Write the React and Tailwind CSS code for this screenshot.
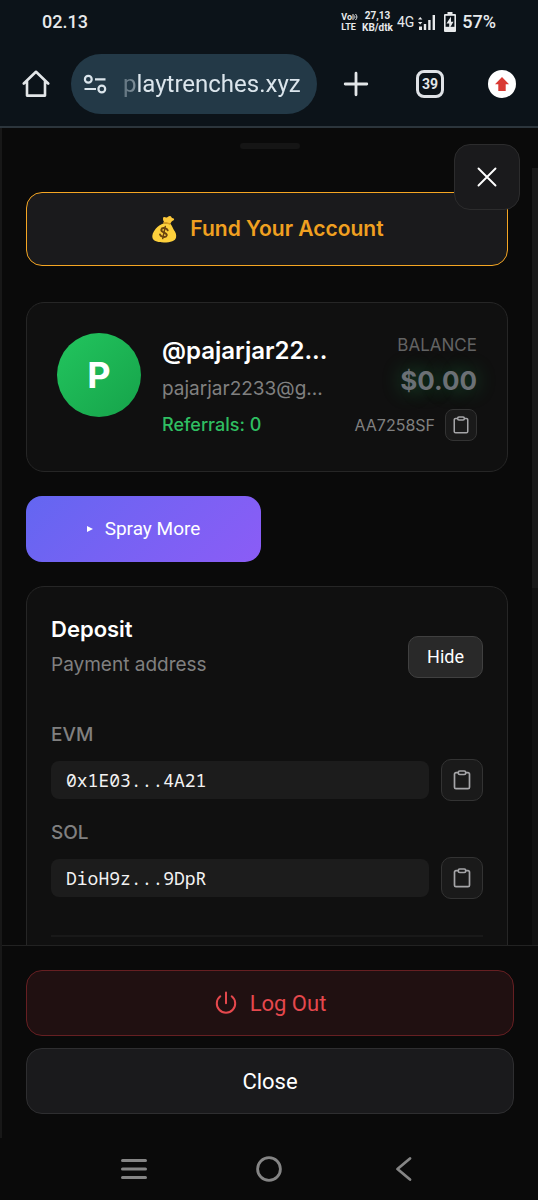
import React, { useState } from 'react'

const addresses = [
  { label: 'EVM', value: '0x1E03...4A21' },
  { label: 'SOL', value: 'DioH9z...9DpR' },
]

function ClipboardIcon({ className }) {
  return (
    <svg
      className={className}
      viewBox="0 0 20 20"
      fill="none"
      stroke="currentColor"
      strokeWidth="1.700"
      strokeLinejoin="round"
    >
      <path d="M6.300 2.700H4a1.500 1.500 0 0 0-1.500 1.500v13a1.500 1.500 0 0 0 1.500 1.500h12a1.500 1.500 0 0 0 1.500-1.500v-13A1.500 1.500 0 0 0 16 2.700h-2.300" />
      <rect x="6.300" y="1" width="7.400" height="3.500" rx="1.400" />
    </svg>
  )
}

function MoneyBagIcon() {
  return (
    <svg className="h-7 w-7" viewBox="0 0 28 28">
      <path
        d="M14.5 7.4c-1.4-1.5-1.9-3.7-1.2-5 .9-.9 2.3.5 3.6 0 1.300-.5 1.700-1.600 3.100-1.500 1.300.1 1.200 1.500 2.200 2 1 .4 2 .4 1.900 1.500-.2 1.200-1.700 1.100-2.400 2-.6.8-.8 1.300-1.300 2z"
        fill="#fdc93a"
      />
      <path
        d="M14 8.200c-3.500 1.100-6.200 3-8.300 5.600-2.600 3.100-4 6.700-3.200 9.200 1 3.100 5 4.400 11.300 4.400 7 0 11.700-1.300 12.300-5.200.4-2.800-.4-4.700-2.200-7.200-1-1.500-2.100-4.600-3.700-6.400z"
        fill="#fdd03c"
      />
      <path
        d="M13.300 7.200c2.500-.4 5.200.200 7.300 1.600l-.6 1.300c-2.200-1.200-4.500-1.700-7-1.400z"
        fill="#d79a1e"
      />
      <g
        transform="rotate(12 14 17.500)"
        fill="none"
        stroke="#6b4410"
        strokeWidth="1.900"
        strokeLinecap="round"
      >
        <path d="M17.200 14.600c-.7-1.200-1.800-1.500-3.200-1.500-1.900 0-3.200.8-3.200 2.200 0 3.300 6.500 1.100 6.500 4.400 0 1.500-1.400 2.300-3.300 2.300-1.600 0-2.900-.5-3.500-1.700" />
        <path d="M14 11.300v12.400" strokeWidth="1.500" />
      </g>
    </svg>
  )
}

function StatusBar() {
  return (
    <div className="flex h-[43px] shrink-0 items-center justify-between px-[42px] font-['Roboto',sans-serif] text-[#e8eaec]">
      <span className="text-lg font-medium">02.13</span>
      <div className="flex items-center">
        <div className="mr-1 flex flex-col text-[9px] leading-[10px] font-bold">
          <span className="flex items-center">
            Vo
            <svg
              className="h-2 w-1.5"
              viewBox="0 0 6 8"
              fill="none"
              stroke="currentColor"
            >
              <path d="M1 1v6M2.300 2.500c.8 1 .8 2 0 3M3.500 1c1.900 1.900 1.900 4.100 0 6" />
            </svg>
          </span>
          <span>LTE</span>
        </div>
        <div className="mr-1 flex flex-col items-center text-[10px] leading-3 font-bold">
          <span>27,13</span>
          <span>KB/dtk</span>
        </div>
        <span className="mr-1 text-sm">4G</span>
        <svg
          className="mr-2 h-[18px] w-[18px]"
          viewBox="0 0 18 18"
          fill="currentColor"
        >
          <path d="M0 6.500 2.200 4l2.200 2.500zM0 9l2.200 2.500L4.400 9zM1 13.500h3V17H1zM5.800 11h2.400v6H5.800zM10.200 7h2.400v10h-2.400zM14.600 2H17v15h-2.400z" />
        </svg>
        <svg className="mr-1.5 h-5 w-3" viewBox="0 0 12 20">
          <path
            d="M3.500 0h5v2H11a1 1 0 0 1 1 1v16a1 1 0 0 1-1 1H1a1 1 0 0 1-1-1V3a1 1 0 0 1 1-1h2.500z"
            fill="currentColor"
          />
          <rect x="1.600" y="3.800" width="8.800" height="11" fill="#0c1319" />
          <path d="M7 4.500 2.500 11.500h2.700v5.500l4.300-7.200H7z" fill="currentColor" />
        </svg>
        <span className="text-lg font-medium">57%</span>
      </div>
    </div>
  )
}

function BrowserBar() {
  const [url, setUrl] = useState('playtrenches.xyz')

  return (
    <div className="flex shrink-0 items-center border-b-2 border-[#2c353c] px-[22px] pt-[11px] pb-3">
      <button type="button" aria-label="Home" className="text-[#e3e6e8]">
        <svg
          className="h-7 w-7"
          viewBox="0 0 28 28"
          fill="none"
          stroke="currentColor"
          strokeWidth="2.600"
          strokeLinejoin="round"
          strokeLinecap="round"
        >
          <path d="M1.800 13.500 14 1.800l12.200 11.700M5 11v14.600h18V11" />
        </svg>
      </button>
      <div className="ml-[21px] flex h-[60px] min-w-0 flex-1 items-center rounded-full bg-[#233947] pr-2 pl-3">
        <button
          type="button"
          aria-label="Site information"
          className="shrink-0 text-[#dbe5ec]"
        >
          <svg
            className="h-6 w-6"
            viewBox="0 0 24 24"
            fill="none"
            stroke="currentColor"
            strokeWidth="2.200"
          >
            <circle cx="5.300" cy="7.300" r="3.400" />
            <path d="M12 7.300h10.500M1.500 17H13" />
            <circle cx="18.800" cy="17" r="3.400" />
          </svg>
        </button>
        <input
          type="text"
          aria-label="Address"
          value={url}
          onChange={(e) => setUrl(e.target.value)}
          className="ml-4 w-full min-w-0 bg-transparent font-['Roboto',sans-serif] text-2xl text-[#dbe5ec] outline-none [mask-image:linear-gradient(to_right,rgba(0,0,0,0.35),rgba(0,0,0,0.5)_13px,black_15px)]"
        />
      </div>
      <button
        type="button"
        aria-label="New tab"
        className="ml-[26px] text-[#e3e6e8]"
      >
        <svg
          className="h-[26px] w-[26px]"
          viewBox="0 0 26 26"
          stroke="currentColor"
          strokeWidth="2.800"
          strokeLinecap="round"
        >
          <path d="M13 2.200v21.600M2.200 13h21.600" />
        </svg>
      </button>
      <button
        type="button"
        aria-label="Open tabs"
        className="ml-[47px] flex h-7 w-7 items-center justify-center rounded-lg border-[3px] border-[#dfe2e6] font-['Roboto',sans-serif] text-sm font-bold text-[#e3e6e8]"
      >
        39
      </button>
      <button
        type="button"
        aria-label="Update available"
        className="ml-[44px] flex h-7 w-7 items-center justify-center rounded-full bg-white"
      >
        <svg className="h-3.5 w-3.5" viewBox="0 0 14 14" fill="#d93a33">
          <path d="M7 0 14 7.200h-3.300V14H3.300V7.200H0z" />
        </svg>
      </button>
    </div>
  )
}

function AddressRow({ label, value }) {
  return (
    <div>
      <p className="mb-2 text-[19px] leading-8 font-medium text-[#808080]">
        {label}
      </p>
      <div className="flex items-center gap-3">
        <code className="flex h-[38px] min-w-0 flex-1 items-center rounded-lg bg-[#1c1c1c] px-[15px] font-['Noto_Sans_Mono','DejaVu_Sans_Mono',monospace] text-lg leading-6 text-[#f2f2f2]">
          {value}
        </code>
        <button
          type="button"
          aria-label={`Copy ${label} address`}
          className="flex h-[42px] w-[42px] items-center justify-center rounded-[10px] border border-[#333333] bg-[#1a1a1a] text-[#a5a5a8]"
        >
          <ClipboardIcon className="h-5 w-5" />
        </button>
      </div>
    </div>
  )
}

export default function App() {
  const [showDeposit, setShowDeposit] = useState(true)

  return (
    <div className="flex h-screen flex-col bg-[#0a0a0a] font-['Inter',sans-serif]">
      <header className="shrink-0 bg-[#0c1319]">
        <StatusBar />
        <BrowserBar />
      </header>

      <main className="relative flex min-h-0 flex-1 flex-col border-l-2 border-[#181818] bg-[#0a0a0a]">
        <div className="h-10 shrink-0 pt-[15px]">
          <div className="mx-auto h-1.5 w-[60px] rounded-full bg-[#151515]" />
        </div>
        <button
          type="button"
          aria-label="Close panel"
          className="absolute top-4 right-[18px] flex h-[66px] w-[66px] items-center justify-center rounded-2xl border border-[#2c2c2d] bg-[#1a1a1c] text-white"
        >
          <svg
            className="h-5 w-5"
            viewBox="0 0 20 20"
            stroke="currentColor"
            strokeWidth="1.900"
            strokeLinecap="round"
          >
            <path d="M1.500 1.500l17 17M18.500 1.500l-17 17" />
          </svg>
        </button>

        <div className="flex min-h-0 flex-1">
          <div className="min-w-0 flex-1 overflow-hidden px-6 pt-6">
            <button
              type="button"
              className="flex h-[74px] w-full items-center justify-center gap-3 rounded-2xl border border-[#f5a623] bg-[#1a1a1c] text-[21px] font-semibold text-[#f0a020]"
            >
              <MoneyBagIcon />
              Fund Your Account
            </button>

            <section className="mt-9 flex rounded-[18px] border border-[#262626] bg-[#101010] p-[30px]">
              <div className="flex h-[84px] w-[84px] shrink-0 items-center justify-center rounded-full bg-linear-to-br from-[#22c55e] to-[#16a34a] text-4xl font-bold text-white">
                P
              </div>
              <div className="ml-[21px] min-w-0 flex-1 whitespace-nowrap">
                <p className="text-2xl leading-9 font-semibold text-white">
                  @pajarjar22...
                </p>
                <p className="text-[19px] leading-10 text-[#808080]">
                  pajarjar2233@g...
                </p>
                <p className="text-lg leading-8 font-medium text-[#2fbf62]">
                  Referrals: 0
                </p>
              </div>
              <div className="flex flex-col items-end">
                <p className="text-[17px] leading-6 text-[#636363]">BALANCE</p>
                <p className="text-[26px] leading-[48px] font-bold text-[#6b7075] text-shadow-[0_0_20px_rgba(34,197,94,0.4)]">
                  $0.00
                </p>
                <div className="mt-1 flex items-center gap-2.5">
                  <span className="text-base text-[#808080]">AA7258SF</span>
                  <button
                    type="button"
                    aria-label="Copy referral code"
                    className="flex h-8 w-8 items-center justify-center rounded-lg border border-[#333333] bg-[#1a1a1a] text-[#a5a5a8]"
                  >
                    <ClipboardIcon className="h-[18px] w-[18px]" />
                  </button>
                </div>
              </div>
            </section>

            <div className="mt-6 grid grid-cols-2 gap-3">
              <button
                type="button"
                className="flex h-[66px] items-center justify-center gap-3 rounded-2xl bg-linear-135 from-[#6366f1] to-[#8b5cf6] font-['Roboto',sans-serif] text-[19px] text-white"
              >
                <svg
                  className="h-1.5 w-1.5"
                  viewBox="0 0 6 6"
                  fill="currentColor"
                >
                  <path d="M0 0l6 3-6 3z" />
                </svg>
                Spray More
              </button>
            </div>

            <section className="mt-6 rounded-[18px] border border-[#262626] bg-[#101010] p-6">
              <div className="mb-4 flex items-center justify-between">
                <div className="pb-5">
                  <h2 className="text-[22px] leading-9 font-semibold text-white">
                    Deposit
                  </h2>
                  <p className="text-[19px] leading-9 text-[#808080]">
                    Payment address
                  </p>
                </div>
                <button
                  type="button"
                  onClick={() => setShowDeposit(!showDeposit)}
                  className="h-[42px] rounded-[10px] border border-[#404040] bg-[#292929] px-[18px] font-['Roboto',sans-serif] text-lg text-white"
                >
                  {showDeposit ? 'Hide' : 'Show'}
                </button>
              </div>
              {showDeposit && (
                <div className="flex flex-col gap-4">
                  {addresses.map((address) => (
                    <AddressRow key={address.label} {...address} />
                  ))}
                </div>
              )}
              <div className="mt-9 h-12 border-t-2 border-[#191919]" />
            </section>
          </div>
          {/* scrollbar */}
          <div className="w-1.5 shrink-0 bg-[#111111]">
            <div className="h-[54%] bg-[#191919]" />
          </div>
        </div>

        <footer className="flex shrink-0 flex-col gap-3 border-t border-[#222222] bg-[#0a0a0a] p-6 font-['Roboto',sans-serif] text-[22px]">
          <button
            type="button"
            className="flex h-[66px] items-center justify-center gap-3 rounded-2xl border border-[#661f22] bg-[#201011] text-[#e5484d]"
          >
            <svg
              className="h-6 w-6"
              viewBox="0 0 24 24"
              fill="none"
              stroke="currentColor"
              strokeWidth="2"
              strokeLinecap="round"
            >
              <path d="M12 1.500v10.800M6.300 5.300a9.200 9.200 0 1 0 11.400 0" />
            </svg>
            Log Out
          </button>
          <button
            type="button"
            className="h-[66px] rounded-2xl border border-[#2e2e30] bg-[#1a1a1c] text-white"
          >
            Close
          </button>
        </footer>
      </main>

      <nav className="grid h-[62px] shrink-0 grid-cols-3 items-center justify-items-center px-[67px] text-[#858585]">
        <button type="button" aria-label="Recent apps">
          <svg
            className="h-7 w-7"
            viewBox="0 0 28 28"
            stroke="currentColor"
            strokeWidth="3"
            strokeLinecap="round"
          >
            <path d="M2.500 5.500h23M2.500 14h23M2.500 22.500h23" />
          </svg>
        </button>
        <button type="button" aria-label="Home screen">
          <svg
            className="h-7 w-7"
            viewBox="0 0 28 28"
            fill="none"
            stroke="currentColor"
            strokeWidth="2.800"
          >
            <circle cx="14" cy="14" r="11.400" />
          </svg>
        </button>
        <button type="button" aria-label="Back">
          <svg
            className="h-7 w-7"
            viewBox="0 0 28 28"
            fill="none"
            stroke="currentColor"
            strokeWidth="2.800"
            strokeLinecap="round"
            strokeLinejoin="round"
          >
            <path d="M20 3.500 7.500 14 20 24.500" />
          </svg>
        </button>
      </nav>
    </div>
  )
}
